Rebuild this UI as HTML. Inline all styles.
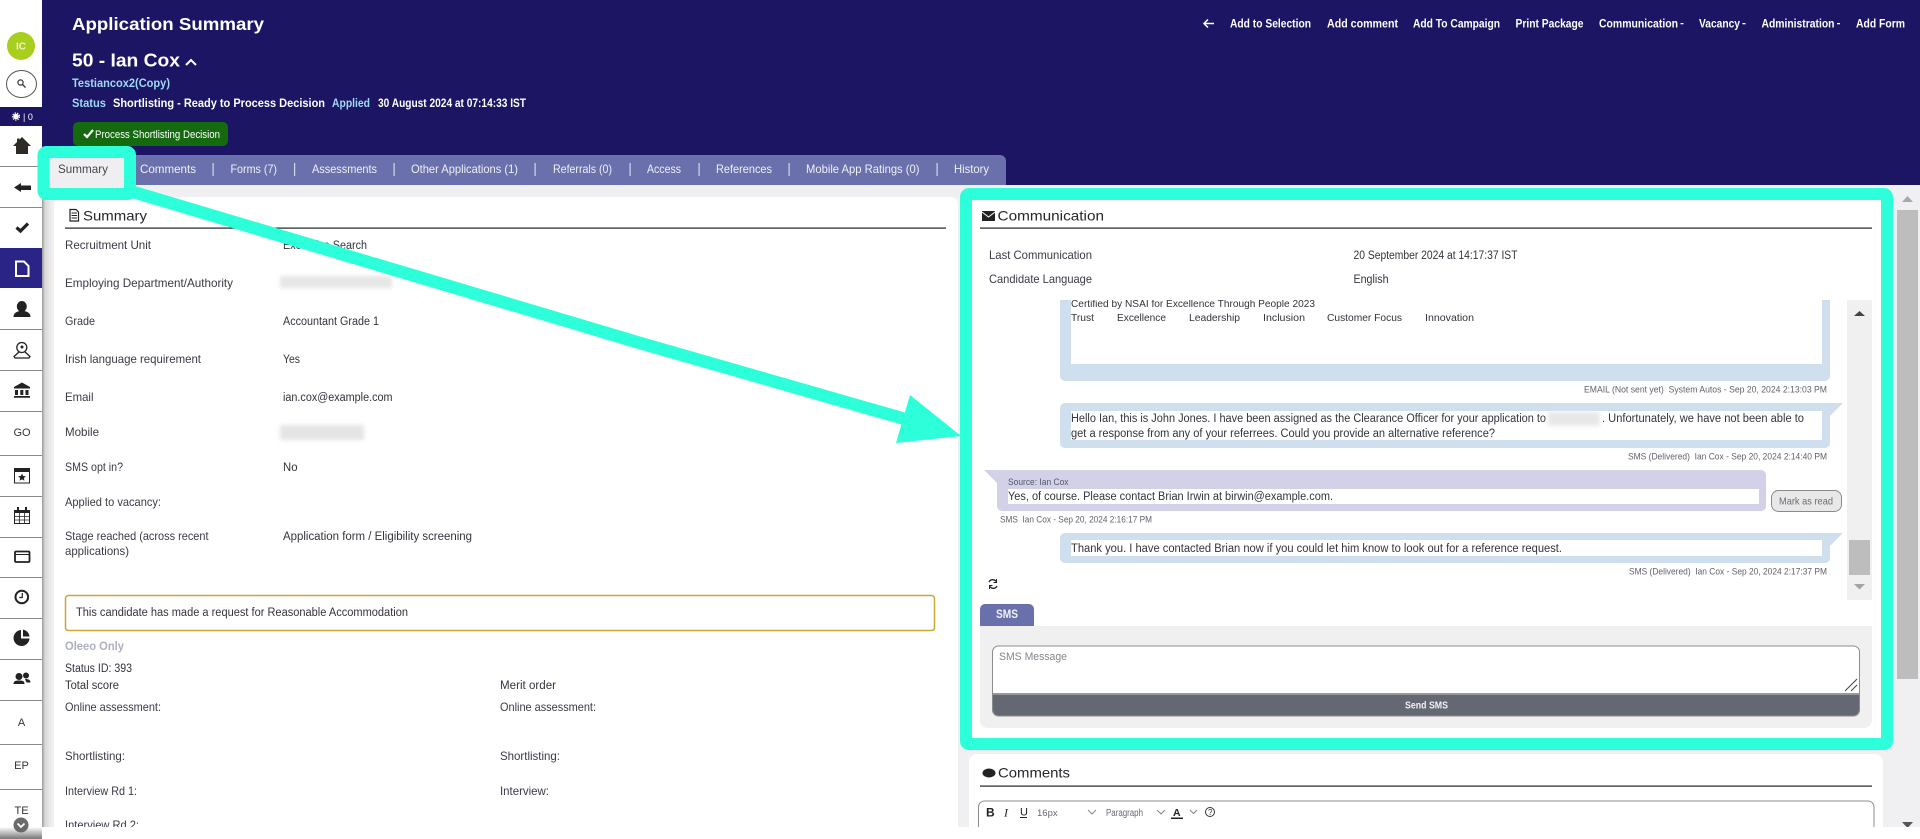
<!DOCTYPE html>
<html lang="en"><head><meta charset="utf-8"><title>Application Summary</title>
<style>
html,body{margin:0;padding:0;background:#fff;width:1920px;height:839px;overflow:hidden}
svg{display:block;position:absolute;left:0;top:0}
text{font-family:"Liberation Sans",sans-serif;white-space:pre}
.l{font-size:12px;fill:#3a3a46}
.v{font-size:11.5px;fill:#33333d}
.h{font-size:12px;fill:#fff;font-weight:bold}
.tb{font-size:12px;fill:#eef0fa}
.m{font-size:11.5px;fill:#33343c}
.meta{font-size:9.5px;fill:#60626c}
.sb{font-size:11px;fill:#333;text-anchor:middle}
</style></head><body>
<svg width="1920" height="839" viewBox="0 0 1920 839" xmlns="http://www.w3.org/2000/svg">
<defs>
<filter id="b" x="-20%" y="-50%" width="140%" height="200%"><feGaussianBlur stdDeviation="2"/></filter>
<linearGradient id="sh" x1="0" x2="1" y1="0" y2="0"><stop offset="0" stop-color="#999"/><stop offset=".3" stop-color="#d8d8d8"/><stop offset="1" stop-color="#f0f0f2"/></linearGradient>
<linearGradient id="bt" x1="0" x2="0" y1="0" y2="1"><stop offset="0" stop-color="#fff"/><stop offset="1" stop-color="#777"/></linearGradient>
<clipPath id="chat"><rect x="980" y="300" width="892" height="300"/></clipPath>
</defs>

<rect width="1920" height="839" fill="#fff"/>
<rect x="42" y="185" width="1878" height="642" fill="#f0f0f2"/>
<rect x="42" y="0" width="1878" height="185" fill="#1b1563"/>
<path d="M42 155H1000a6 6 0 0 1 6 6V185H42Z" fill="#6a70ab"/>
<rect x="42" y="185" width="10" height="642" fill="url(#sh)"/>

<!-- Header -->
<text x="72" y="30" font-size="17.5" fill="#fff" font-weight="bold" textLength="192" lengthAdjust="spacingAndGlyphs">Application Summary</text>
<text x="72" y="66.5" font-size="18" fill="#fff" font-weight="bold" textLength="108" lengthAdjust="spacingAndGlyphs">50 - Ian Cox</text>
<path d="M186 65l5-5 5 5" fill="none" stroke="#fff" stroke-width="2"/>
<text x="72" y="87" class="h" style="fill:#9fd8f5" textLength="98" lengthAdjust="spacingAndGlyphs">Testiancox2(Copy)</text>
<text x="72" y="107" class="h" style="fill:#9fd8f5" textLength="34" lengthAdjust="spacingAndGlyphs">Status</text>
<text x="113" y="107" class="h" textLength="212" lengthAdjust="spacingAndGlyphs">Shortlisting - Ready to Process Decision</text>
<text x="332" y="107" class="h" style="fill:#9fd8f5" textLength="38" lengthAdjust="spacingAndGlyphs">Applied</text>
<text x="378" y="107" class="h" textLength="148" lengthAdjust="spacingAndGlyphs">30 August 2024 at 07:14:33 IST</text>
<rect x="73" y="122" width="155" height="24" rx="5" fill="#156a10"/>
<path d="M84 134l3 3 6-7" fill="none" stroke="#fff" stroke-width="2.2"/>
<text x="95" y="138" font-size="11" fill="#fff" textLength="125" lengthAdjust="spacingAndGlyphs">Process Shortlisting Decision</text>

<!-- Top actions -->
<path d="M1214 23.5H1204M1208 19.5l-4 4 4 4" fill="none" stroke="#fff" stroke-width="1.5"/>
<g class="acts">
<text x="1230" y="27.5" class="h" textLength="81" lengthAdjust="spacingAndGlyphs">Add to Selection</text>
<text x="1327" y="27.5" class="h" textLength="71" lengthAdjust="spacingAndGlyphs">Add comment</text>
<text x="1413" y="27.5" class="h" textLength="87" lengthAdjust="spacingAndGlyphs">Add To Campaign</text>
<text x="1515.5" y="27.5" class="h" textLength="68" lengthAdjust="spacingAndGlyphs">Print Package</text>
<text x="1599" y="27.5" class="h" textLength="79" lengthAdjust="spacingAndGlyphs">Communication</text>
<rect x="1680.5" y="23" width="3" height="1.3" fill="#fff"/>
<text x="1699" y="27.5" class="h" textLength="41" lengthAdjust="spacingAndGlyphs">Vacancy</text>
<rect x="1742.5" y="23" width="3" height="1.3" fill="#fff"/>
<text x="1761.5" y="27.5" class="h" textLength="73" lengthAdjust="spacingAndGlyphs">Administration</text>
<rect x="1837" y="23" width="3" height="1.3" fill="#fff"/>
<text x="1856" y="27.5" class="h" textLength="49" lengthAdjust="spacingAndGlyphs">Add Form</text>
</g>

<!-- Tabs -->
<rect x="49" y="158" width="75" height="30" fill="#efeff1"/>
<text x="58" y="173" class="tb" style="fill:#45464f" textLength="50" lengthAdjust="spacingAndGlyphs">Summary</text>
<text x="140" y="173" class="tb" textLength="56" lengthAdjust="spacingAndGlyphs">Comments</text>
<text x="230.5" y="173" class="tb" textLength="46.5" lengthAdjust="spacingAndGlyphs">Forms (7)</text>
<text x="312" y="173" class="tb" textLength="65" lengthAdjust="spacingAndGlyphs">Assessments</text>
<text x="411" y="173" class="tb" textLength="107" lengthAdjust="spacingAndGlyphs">Other Applications (1)</text>
<text x="553" y="173" class="tb" textLength="59" lengthAdjust="spacingAndGlyphs">Referrals (0)</text>
<text x="647" y="173" class="tb" textLength="34" lengthAdjust="spacingAndGlyphs">Access</text>
<text x="716" y="173" class="tb" textLength="56" lengthAdjust="spacingAndGlyphs">References</text>
<text x="806" y="173" class="tb" textLength="113.5" lengthAdjust="spacingAndGlyphs">Mobile App Ratings (0)</text>
<text x="954" y="173" class="tb" textLength="35" lengthAdjust="spacingAndGlyphs">History</text>
<g fill="#d5d8ea">
<rect x="212.5" y="163" width="1.2" height="13"/><rect x="294" y="163" width="1.2" height="13"/><rect x="393.5" y="163" width="1.2" height="13"/><rect x="534.5" y="163" width="1.2" height="13"/><rect x="629.5" y="163" width="1.2" height="13"/><rect x="698.5" y="163" width="1.2" height="13"/><rect x="788.5" y="163" width="1.2" height="13"/><rect x="936.5" y="163" width="1.2" height="13"/>
</g>

<!-- Summary card -->
<rect x="54" y="197" width="904" height="640" rx="7" fill="#fff"/>
<path d="M70 209.5h6l2.5 2.5v9H70Z" fill="#fff" stroke="#222" stroke-width="1.2"/>
<path d="M71.5 213h5.5M71.5 215.5h5.500M71.5 218h5.500" stroke="#222"/>
<text x="83" y="220.500" font-size="14" fill="#26262c" textLength="64" lengthAdjust="spacingAndGlyphs">Summary</text>
<rect x="65" y="227.5" width="881" height="1.2" fill="#222"/>

<text x="65" y="249" class="l" textLength="86" lengthAdjust="spacingAndGlyphs">Recruitment Unit</text>
<text x="283" y="249" class="v" textLength="84" lengthAdjust="spacingAndGlyphs">Executive Search</text>
<text x="65" y="287" class="l" textLength="168" lengthAdjust="spacingAndGlyphs">Employing Department/Authority</text>
<rect x="280" y="276" width="112" height="12" fill="#e6e6e6" filter="url(#b)"/>
<text x="65" y="325" class="l" textLength="30" lengthAdjust="spacingAndGlyphs">Grade</text>
<text x="283" y="325" class="v" textLength="96" lengthAdjust="spacingAndGlyphs">Accountant Grade 1</text>
<text x="65" y="363" class="l" textLength="136" lengthAdjust="spacingAndGlyphs">Irish language requirement</text>
<text x="283" y="363" class="v" textLength="17" lengthAdjust="spacingAndGlyphs">Yes</text>
<text x="65" y="401" class="l" textLength="28.5" lengthAdjust="spacingAndGlyphs">Email</text>
<text x="283" y="401" class="v" textLength="109.5" lengthAdjust="spacingAndGlyphs">ian.cox@example.com</text>
<text x="65" y="436" class="l" textLength="34" lengthAdjust="spacingAndGlyphs">Mobile</text>
<rect x="280" y="425" width="84" height="15" fill="#e4e4e4" filter="url(#b)"/>
<text x="65" y="471" class="l" textLength="58" lengthAdjust="spacingAndGlyphs">SMS opt in?</text>
<text x="283" y="471" class="v" textLength="14.5" lengthAdjust="spacingAndGlyphs">No</text>
<text x="65" y="506" class="l" textLength="96" lengthAdjust="spacingAndGlyphs">Applied to vacancy:</text>
<text x="65" y="540" class="l" textLength="143.5" lengthAdjust="spacingAndGlyphs">Stage reached (across recent</text>
<text x="65" y="555" class="l" textLength="64" lengthAdjust="spacingAndGlyphs">applications)</text>
<text x="283" y="540" class="v" textLength="189" lengthAdjust="spacingAndGlyphs">Application form / Eligibility screening</text>

<rect x="65.5" y="595.5" width="869" height="35" rx="3" fill="#fff" stroke="#c9a733" stroke-width="1.5"/>
<text x="76" y="616" class="v" textLength="332" lengthAdjust="spacingAndGlyphs">This candidate has made a request for Reasonable Accommodation</text>
<text x="65" y="650" font-size="12" font-weight="bold" fill="#aeb0c0" textLength="59" lengthAdjust="spacingAndGlyphs">Oleeo Only</text>
<text x="65" y="672" class="v" textLength="67" lengthAdjust="spacingAndGlyphs">Status ID: 393</text>
<text x="65" y="689" class="v" textLength="54" lengthAdjust="spacingAndGlyphs">Total score</text>
<text x="500" y="689" class="v" textLength="56" lengthAdjust="spacingAndGlyphs">Merit order</text>
<text x="65" y="711" class="l" textLength="96" lengthAdjust="spacingAndGlyphs">Online assessment:</text>
<text x="500" y="711" class="l" textLength="96" lengthAdjust="spacingAndGlyphs">Online assessment:</text>
<text x="65" y="760" class="l" textLength="60" lengthAdjust="spacingAndGlyphs">Shortlisting:</text>
<text x="500" y="760" class="l" textLength="60" lengthAdjust="spacingAndGlyphs">Shortlisting:</text>
<text x="65" y="795" class="l" textLength="72" lengthAdjust="spacingAndGlyphs">Interview Rd 1:</text>
<text x="500" y="795" class="l" textLength="49" lengthAdjust="spacingAndGlyphs">Interview:</text>
<text x="65" y="829" class="l" textLength="74" lengthAdjust="spacingAndGlyphs">Interview Rd 2:</text>

<!-- Page scrollbar -->
<rect x="1897" y="210" width="21" height="469" fill="#bdbdbd"/>
<path d="M1902 202l5.500-6 5.500 6Z" fill="#a8a8a8"/>
<path d="M1902 822h11l-5.500 6Z" fill="#555"/>

<!-- Communication card -->
<rect x="972" y="200" width="909" height="538" fill="#fff"/>
<path d="M982 211h13v10h-13Z" fill="#222"/><path d="M982 212l6.500 5 6.500-5" fill="none" stroke="#fff" stroke-width="1"/>
<text x="997.500" y="220.500" font-size="14" fill="#26262c" textLength="106.500" lengthAdjust="spacingAndGlyphs">Communication</text>
<rect x="980" y="227.500" width="892" height="1.200" fill="#222"/>
<text x="989" y="259" class="l" textLength="103" lengthAdjust="spacingAndGlyphs">Last Communication</text>
<text x="1353.500" y="259" class="v" textLength="164" lengthAdjust="spacingAndGlyphs">20 September 2024 at 14:17:37 IST</text>
<text x="989" y="283" class="l" textLength="103" lengthAdjust="spacingAndGlyphs">Candidate Language</text>
<text x="1353.500" y="283" class="v" textLength="35" lengthAdjust="spacingAndGlyphs">English</text>

<g clip-path="url(#chat)">
<path d="M1060 290H1830V376a5 5 0 0 1-5 5H1065a5 5 0 0 1-5-5Z" fill="#cfdfee"/>
<rect x="1071" y="290" width="751" height="74" fill="#fff"/>
<text x="1071" y="307" font-size="10.500" fill="#33343c" textLength="244" lengthAdjust="spacingAndGlyphs">Certified by NSAI for Excellence Through People 2023</text>
<g font-size="10.500" fill="#33343c">
<text x="1071" y="321" textLength="23" lengthAdjust="spacingAndGlyphs">Trust</text>
<text x="1117" y="321" textLength="49" lengthAdjust="spacingAndGlyphs">Excellence</text>
<text x="1189" y="321" textLength="51" lengthAdjust="spacingAndGlyphs">Leadership</text>
<text x="1263" y="321" textLength="42" lengthAdjust="spacingAndGlyphs">Inclusion</text>
<text x="1327" y="321" textLength="75" lengthAdjust="spacingAndGlyphs">Customer Focus</text>
<text x="1425" y="321" textLength="49" lengthAdjust="spacingAndGlyphs">Innovation</text>
</g>
<text x="1584" y="392.500" class="meta" textLength="243" lengthAdjust="spacingAndGlyphs">EMAIL (Not sent yet)  System Autos - Sep 20, 2024 2:13:03 PM</text>

<path d="M1065 403H1843L1830 416V443a5 5 0 0 1-5 5H1065a5 5 0 0 1-5-5V408a5 5 0 0 1 5-5Z" fill="#cfdfee"/>
<rect x="1071" y="411" width="751" height="29" fill="#fff"/>
<text x="1071" y="422" class="m" textLength="475" lengthAdjust="spacingAndGlyphs">Hello Ian, this is John Jones. I have been assigned as the Clearance Officer for your application to</text>
<text x="1602" y="422" class="m" textLength="202" lengthAdjust="spacingAndGlyphs">. Unfortunately, we have not been able to</text>
<text x="1071" y="437" class="m" textLength="424" lengthAdjust="spacingAndGlyphs">get a response from any of your referrees. Could you provide an alternative reference?</text>
<rect x="1548" y="412" width="52" height="14" fill="#e8e8e8" filter="url(#b)"/>
<text x="1628" y="459.500" class="meta" textLength="199" lengthAdjust="spacingAndGlyphs">SMS (Delivered)  Ian Cox - Sep 20, 2024 2:14:40 PM</text>

<path d="M984 470H1761a5 5 0 0 1 5 5V506a5 5 0 0 1-5 5H1002a5 5 0 0 1-5-5V483Z" fill="#d2d1e8"/>
<text x="1008" y="485" font-size="9" fill="#55566a" textLength="60.500" lengthAdjust="spacingAndGlyphs">Source: Ian Cox</text>
<rect x="1008" y="489" width="751" height="15" fill="#fff"/>
<text x="1008" y="500" class="m" textLength="325" lengthAdjust="spacingAndGlyphs">Yes, of course. Please contact Brian Irwin at birwin@example.com.</text>
<rect x="1771.500" y="490.500" width="70" height="21" rx="7" fill="#e8e8e8" stroke="#8a8a8a"/>
<text x="1779" y="504.500" font-size="10.500" fill="#6a6c76" textLength="54" lengthAdjust="spacingAndGlyphs">Mark as read</text>
<text x="1000" y="522.500" class="meta" textLength="152" lengthAdjust="spacingAndGlyphs">SMS  Ian Cox - Sep 20, 2024 2:16:17 PM</text>

<path d="M1065 533H1843L1830 546V558a5 5 0 0 1-5 5H1065a5 5 0 0 1-5-5V538a5 5 0 0 1 5-5Z" fill="#cfdfee"/>
<rect x="1071" y="540" width="751" height="16" fill="#fff"/>
<text x="1071" y="552" class="m" textLength="491" lengthAdjust="spacingAndGlyphs">Thank you. I have contacted Brian now if you could let him know to look out for a reference request.</text>
<text x="1629" y="574.500" class="meta" textLength="198" lengthAdjust="spacingAndGlyphs">SMS (Delivered)  Ian Cox - Sep 20, 2024 2:17:37 PM</text>
</g>

<rect x="1847" y="300" width="25" height="300" fill="#f0f0f0"/>
<path d="M1854 316l5.500-5 5.500 5Z" fill="#444"/>
<rect x="1849" y="540" width="21" height="35" fill="#bdbdbd"/>
<path d="M1854 584h11l-5.500 5.500Z" fill="#a4a4a4"/>

<path d="M989 582a4 4 0 0 1 7-0.500M997 586a4 4 0 0 1-7 0.500" fill="none" stroke="#222" stroke-width="1.300"/>
<path d="M996.500 579v3.500h-3M989.500 589v-3.500h3" fill="none" stroke="#222" stroke-width="1"/>

<path d="M980 626V609a5 5 0 0 1 5-5H1029a5 5 0 0 1 5 5V626Z" fill="#6a70ab"/>
<text x="996" y="618" font-size="11.500" font-weight="bold" fill="#f0f1fa" textLength="22" lengthAdjust="spacingAndGlyphs">SMS</text>
<path d="M980 626H1872V720a8 8 0 0 1-8 8H988a8 8 0 0 1-8-8Z" fill="#f0f0f0"/>
<path d="M992.500 652a6 6 0 0 1 6-6H1853.500a6 6 0 0 1 6 6V710a6 6 0 0 1-6 6H998.500a6 6 0 0 1-6-6Z" fill="#fff" stroke="#8c8c8c"/>
<path d="M993 693H1859V710a5.500 5.500 0 0 1-5.500 5.500H998.500a5.500 5.500 0 0 1-5.500-5.500Z" fill="#646872"/>
<rect x="993" y="693" width="866" height="2" fill="#999"/>
<text x="999" y="660" font-size="11" fill="#85868e" textLength="68" lengthAdjust="spacingAndGlyphs">SMS Message</text>
<text x="1405" y="708.500" font-size="10.500" font-weight="bold" fill="#f2f2f4" textLength="43" lengthAdjust="spacingAndGlyphs">Send SMS</text>
<path d="M1845 691l12-12M1851 691l6-6" stroke="#444" stroke-width="1"/>

<!-- Comments card -->
<path d="M969 827V762a8 8 0 0 1 8-8H1875a8 8 0 0 1 8 8V827Z" fill="#fff"/>
<ellipse cx="989" cy="773" rx="6.500" ry="4.500" fill="#222"/>
<text x="998" y="777.500" font-size="14" fill="#26262c" textLength="72" lengthAdjust="spacingAndGlyphs">Comments</text>
<rect x="980" y="785.500" width="892" height="1.200" fill="#222"/>
<path d="M978.500 827V807a6 6 0 0 1 6-6H1868a6 6 0 0 1 6 6V827" fill="#fff" stroke="#8c8c8c"/>
<text x="986" y="816.500" font-size="12" font-weight="bold" fill="#222">B</text>
<text x="1004" y="816.500" font-size="12" font-style="italic" fill="#222" style="font-family:'Liberation Serif',serif">I</text>
<text x="1020" y="815.500" font-size="11" fill="#222">U</text><rect x="1020" y="817" width="7" height="1" fill="#222"/>
<text x="1037" y="816" font-size="9.500" fill="#666a72">16px</text>
<text x="1106" y="816" font-size="10" fill="#666a72" textLength="37" lengthAdjust="spacingAndGlyphs">Paragraph</text>
<text x="1173" y="816" font-size="10.500" font-weight="bold" fill="#222">A</text><rect x="1171" y="817.500" width="12" height="1.500" fill="#222"/>
<path d="M1088 810l4 4 4-4M1157 810l4 4 4-4M1190 810l3.500 3.500 3.500-3.500" fill="none" stroke="#888" stroke-width="1"/>
<circle cx="1210" cy="812" r="4.500" fill="none" stroke="#333"/>
<text x="1208" y="815" font-size="8" fill="#333">?</text>

<rect x="42" y="827" width="1878" height="12" fill="#fff"/>

<!-- Sidebar -->
<rect x="0" y="0" width="42" height="839" fill="#fff"/>
<rect x="0" y="827" width="42" height="12" fill="url(#bt)"/>
<ellipse cx="21" cy="46" rx="14" ry="14" fill="#a9cf1e"/>
<text x="21" y="49.500" font-size="10" fill="#eef5c8" font-weight="bold" text-anchor="middle">IC</text>
<ellipse cx="21.500" cy="84" rx="15" ry="13.500" fill="#fff" stroke="#555" stroke-width="1"/>
<circle cx="20.500" cy="82.500" r="2.600" fill="none" stroke="#333" stroke-width="1.200"/><path d="M22.500 84.500l3 3" stroke="#333" stroke-width="1.300"/>
<rect x="0" y="107" width="42" height="19" fill="#1b1563"/>
<circle cx="16" cy="116.500" r="2.800" fill="#fff"/><circle cx="16" cy="116.500" r="3.500" fill="none" stroke="#fff" stroke-width="1.200" stroke-dasharray="1.300 1.200"/>
<text x="23" y="120" font-size="9" fill="#fff">| 0</text>
<rect x="0" y="248" width="42" height="40" fill="#2a2486"/>
<g fill="#8a8a8a">
<rect y="166" width="42" height="1"/><rect y="207" width="42" height="1"/>
<rect y="329" width="42" height="1"/><rect y="370" width="42" height="1"/><rect y="411" width="42" height="1"/><rect y="455" width="42" height="1"/><rect y="496" width="42" height="1"/><rect y="537" width="42" height="1"/><rect y="577" width="42" height="1"/><rect y="618" width="42" height="1"/><rect y="659" width="42" height="1"/><rect y="700" width="42" height="1"/><rect y="744" width="42" height="1"/><rect y="789" width="42" height="1"/>
</g>
<!-- icons -->
<path d="M22 137L31 146H28V154H16V146H13L17 142V138.500H19.500V139.500Z" fill="#2e2a26"/>
<path d="M14 187.500L21 183V185.500H31V190H21V192Z" fill="#222"/>
<path d="M16.500 227.500L20.500 231L28 223.500" fill="none" stroke="#222" stroke-width="3.200"/>
<path d="M16 261.500H24L28.500 266V276H16Z" fill="#2a2486" stroke="#fff" stroke-width="2"/>
<ellipse cx="21.800" cy="306.500" rx="5" ry="5.500" fill="#222"/><path d="M13.500 317c0-4 3-5 6-6h5c3 1 6 2 6 6Z" fill="#222"/>
<circle cx="21.800" cy="347.500" r="5" fill="none" stroke="#222" stroke-width="1.300"/><path d="M19 352l-5 4.500 1 1.500h14l1-1.500-5-4.500" fill="none" stroke="#222" stroke-width="1.300"/><circle cx="22" cy="347" r="1.500" fill="#222"/>
<path d="M22 382.500L30 387V388.500H14V387Z" fill="#222"/><path d="M15 390h3v5h-3ZM20.300 390h3v5h-3ZM25.500 390h3v5h-3ZM14 396h16v1.800H14Z" fill="#222"/>
<text x="22" y="436" class="sb">GO</text>
<rect x="14.500" y="468.500" width="15" height="14.500" fill="#fff" stroke="#222"/><rect x="14" y="468" width="16" height="4" fill="#222"/><path d="M22 473.500l1.200 2.500 2.600.3-1.900 1.800.5 2.600-2.400-1.300-2.400 1.300.5-2.600-1.900-1.800 2.600-.3Z" fill="#222"/>
<rect x="14.500" y="510.500" width="15" height="13" fill="#fff" stroke="#222"/><rect x="14" y="510" width="16" height="3" fill="#222"/><path d="M14.500 516.500h15M14.500 520h15M19.500 513v10M24.500 513v10" stroke="#222" stroke-width=".8"/><rect x="17" y="507" width="2" height="4" fill="#222"/><rect x="25" y="507" width="2" height="4" fill="#222"/>
<rect x="15" y="551.500" width="14.500" height="10.500" rx="1" fill="#fff" stroke="#222" stroke-width="1.800"/><path d="M15 554.500h14.500" stroke="#222"/>
<circle cx="21.800" cy="597" r="6.300" fill="#fff" stroke="#222" stroke-width="2"/><path d="M22.300 593v4.500h-3" fill="none" stroke="#222" stroke-width="1.200"/>
<path d="M21 630a8 8 0 1 0 8.500 8.500H21Z" fill="#222"/><path d="M23 629.500a8 8 0 0 1 6.500 7H23Z" fill="#222"/>
<ellipse cx="19" cy="676.500" rx="3.500" ry="3.500" fill="#222"/><path d="M13.500 684c0-3 2-3.500 5.500-3.500s5.500.5 5.500 3.500Z" fill="#222"/><ellipse cx="26" cy="675.500" rx="3" ry="3" fill="#222"/><path d="M25 679c3 0 5.500.5 5.500 3.500h-4Z" fill="#222"/>
<text x="21.500" y="726" class="sb">A</text>
<text x="21.500" y="769" class="sb">EP</text>
<text x="21.500" y="814" class="sb">TE</text>
<circle cx="21" cy="825" r="7.500" fill="#6a6a6a"/><path d="M17.500 823.500l3.500 3.500 3.500-3.500" fill="none" stroke="#fff" stroke-width="1.800"/>

<!-- Highlights -->
<rect x="43.500" y="152" width="86.500" height="42" rx="3" fill="none" stroke="#2cffd9" stroke-width="12"/>
<rect x="966" y="194" width="921" height="550" rx="3" fill="none" stroke="#2cffd9" stroke-width="12"/>
<path d="M130 191L640 343L905 419" stroke="#2cffd9" stroke-width="12.500" fill="none"/>
<path d="M910 395L961 436L896 443Z" fill="#2cffd9"/>
</svg>
</body></html>
